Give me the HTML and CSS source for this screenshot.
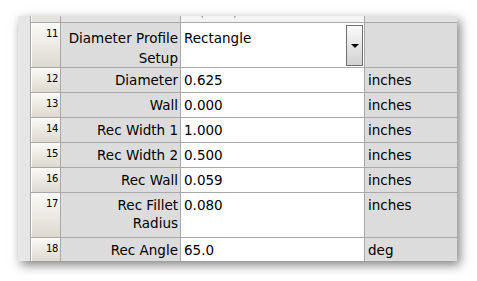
FILE: index.html
```html
<!DOCTYPE html>
<html lang="en">
<head>
  <meta charset="UTF-8">
  <title>Profile Parameters</title>
  <link rel="stylesheet" href="styles.css">
</head>
<body>

<div class="sheet">
  <div class="strip"></div>

  <!-- row 10, scrolled mostly out of view -->
  <div class="hdr partial"></div>
  <div class="label partial"></div>
  <div class="value partial"><span class="cut">(in.)</span></div>
  <div class="unit partial"></div>

  <div class="hdr">11</div>
  <div class="label tall">Diameter Profile<br>Setup</div>
  <div class="value combo">
    <span class="tall">Rectangle</span>
    <span class="drop"><span class="arrow"></span></span>
  </div>
  <div class="unit"></div>

  <div class="hdr">12</div>
  <div class="label">Diameter</div>
  <div class="value">0.625</div>
  <div class="unit">inches</div>

  <div class="hdr">13</div>
  <div class="label">Wall</div>
  <div class="value">0.000</div>
  <div class="unit">inches</div>

  <div class="hdr">14</div>
  <div class="label">Rec Width 1</div>
  <div class="value">1.000</div>
  <div class="unit">inches</div>

  <div class="hdr">15</div>
  <div class="label">Rec Width 2</div>
  <div class="value">0.500</div>
  <div class="unit">inches</div>

  <div class="hdr">16</div>
  <div class="label">Rec Wall</div>
  <div class="value">0.059</div>
  <div class="unit">inches</div>

  <div class="hdr">17</div>
  <div class="label">Rec Fillet<br>Radius</div>
  <div class="value">0.080</div>
  <div class="unit">inches</div>

  <div class="hdr">18</div>
  <div class="label">Rec Angle</div>
  <div class="value">65.0</div>
  <div class="unit">deg</div>
</div>

</body>
</html>
```

FILE: styles.css
```css
body {
  margin: 0;
  height: 281px;
  background-color: #fff;
  font-family: "DejaVu Sans", Verdana, sans-serif;
}

.sheet {
  display: grid;
  grid-template-columns: 12px 29px 119px 183px 92px;
  grid-template-rows: 6px 44px 24px 24px 24px 24px 24px 44px 23px;
  gap: 1px;
  width: 439px;
  height: 245px;
  margin: 16px 0 0 18px;
  background-color: #a8a8a8;
  box-shadow: 3px 4px 10px rgba(0, 0, 0, 0.5);
  overflow: hidden;
  font-size: 13.5px;
  line-height: 18px;
  color: #000;
}

.strip {
  grid-column: 1;
  grid-row: 1 / -1;
  background-color: #e6e6e6;
}

.hdr {
  grid-column: 2;
  padding: 5px 2px 0 0;
  text-align: right;
  font-size: 10px;
  line-height: 12px;
  letter-spacing: -0.3px;
  background: linear-gradient(#fbfaf6, #dcd9cf);
  border-left: 1px solid #fff;
}

.label {
  padding: 3px 2px 0 0;
  text-align: right;
  white-space: nowrap;
  background-color: #dcdcdc;
}

.label.tall {
  padding-top: 5px;
  line-height: 20px;
}

.value {
  padding: 3px 0 0 3px;
  white-space: nowrap;
  background-color: #fff;
}

.unit {
  padding: 3px 0 0 3px;
  background-color: #dcdcdc;
}

.partial {
  padding: 0;
  overflow: hidden;
}

.hdr.partial {
  background: #e4e2dc;
}

.label.partial,
.unit.partial {
  background-color: #e2e2e2;
}

.value.partial {
  background-color: #f4f4f4;
  padding-left: 18px;
}

.cut {
  display: block;
  margin-top: -14px;
  color: #777;
  letter-spacing: 3px;
}

.combo {
  display: flex;
  justify-content: space-between;
  padding: 0;
}

.combo .tall {
  padding: 5px 0 0 3px;
  line-height: 20px;
}

.drop {
  display: flex;
  align-items: center;
  justify-content: center;
  width: 15px;
  margin: 2px 1px 1px 0;
  border: 1px solid #6e6e6e;
  background: linear-gradient(#fafafa, #d2d2d2);
}

.arrow {
  width: 0;
  height: 0;
  border-left: 4px solid transparent;
  border-right: 4px solid transparent;
  border-top: 4px solid #000;
}
```
